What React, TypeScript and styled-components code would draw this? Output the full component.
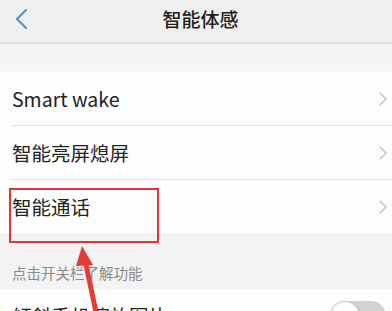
import React from 'react';
import styled, { createGlobalStyle } from 'styled-components';

const GlobalStyle = createGlobalStyle`
  html, body {
    margin: 0;
    padding: 0;
    background: #f4f4f4;
    overflow: hidden;
  }
  body {
    font-family: "Noto Sans CJK SC", "Noto Sans", "Liberation Sans", sans-serif;
  }
`

const Screen = styled.div`
  position: relative;
  width: 392px;
  height: 311px;
  overflow: hidden;
  background: #f4f4f4;
`

const NavBar = styled.header`
  position: relative;
  height: 42px;
  display: flex;
  align-items: center;
  justify-content: center;
  background: #efefef;
  border-bottom: 2px solid #dedede;
`

const BackButton = styled.div`
  position: absolute;
  left: 13px;
  top: 8px;
  width: 16px;
  height: 22px;
  display: flex;
  align-items: center;
  justify-content: center;
`

const NavTitle = styled.h1`
  margin: 0 0 0 9px;
  font-size: 19px;
  font-weight: 500;
  color: #1e1e1e;
  line-height: 1;
  transform: translateY(-3px);
`

const Spacer = styled.div<{ $h: number }>`
  height: ${p => p.$h}px;
  background: linear-gradient(to bottom, #f2f2f2, #f7f7f7);
`

const Group = styled.div`
  background: #fdfdfd;
`

const Row = styled.div<{ $last?: boolean }>`
  display: flex;
  align-items: center;
  height: 53px;
  margin-left: 12px;
  padding-right: 4px;
  border-bottom: ${p => (p.$last ? 'none' : '1px solid #e2e2e2')};
`

const Label = styled.span`
  flex: 1;
  font-size: 19.5px;
  color: #222;
  line-height: 1;
`

const SectionHeader = styled.div`
  height: 56px;
  box-sizing: border-box;
  padding: 33px 0 0 12px;
  background: #f3f3f3;
  font-size: 14.5px;
  color: #8a8a8a;
  line-height: 1;
`

const ToggleTrack = styled.div`
  position: relative;
  width: 56px;
  height: 30px;
  border-radius: 15px;
  background: #d2d2d2;
  margin-right: 2px;
  flex-shrink: 0;
`

const ToggleKnob = styled.div`
  position: absolute;
  left: 1px;
  top: 1px;
  width: 28px;
  height: 28px;
  border-radius: 50%;
  background: #fff;
  box-shadow: 0 1px 3px rgba(0, 0, 0, 0.3);
`

const HighlightBox = styled.div`
  position: absolute;
  left: 9px;
  top: 188px;
  width: 146px;
  height: 51px;
  border: 2px solid #d9383a;
  pointer-events: none;
`

const ArrowOverlay = styled.svg`
  position: absolute;
  left: 0;
  top: 0;
  pointer-events: none;
`

const Chevron: React.FC = () => (
  <svg width="10" height="14" viewBox="0 0 10 14">
    <path d="M2 1 L8 7 L2 13" fill="none" stroke="#c6c6c6" strokeWidth="1.6" strokeLinecap="round" strokeLinejoin="round" />
  </svg>
)

const items = ['Smart wake', '智能亮屏熄屏', '智能通话'];

export default function App() {
  return (
    <>
      <GlobalStyle />
      <Screen>
        <NavBar>
          <BackButton>
            <svg width="14" height="22" viewBox="0 0 14 22">
              <path d="M12 2 L3 11 L12 20" fill="none" stroke="#5b8fc6" strokeWidth="2.2" strokeLinecap="round" strokeLinejoin="round" />
            </svg>
          </BackButton>
          <NavTitle>智能体感</NavTitle>
        </NavBar>
        <Spacer $h={28} />
        <Group>
          {items.map((label, i) => (
            <Row key={label} $last={i === items.length - 1}>
              <Label>{label}</Label>
              <Chevron />
            </Row>
          ))}
        </Group>
        <SectionHeader>点击开关栏了解功能</SectionHeader>
        <Group>
          <Row $last>
            <Label>倾斜手机缩放图片</Label>
            <ToggleTrack>
              <ToggleKnob />
            </ToggleTrack>
          </Row>
        </Group>
        <HighlightBox />
        <ArrowOverlay width="392" height="311" viewBox="0 0 392 311">
          <line x1="96" y1="312" x2="85" y2="260" stroke="#e53a35" strokeWidth="5" />
          <polygon points="82,246 93,265 76,266" fill="#e53a35" />
        </ArrowOverlay>
      </Screen>
    </>
  );
}
